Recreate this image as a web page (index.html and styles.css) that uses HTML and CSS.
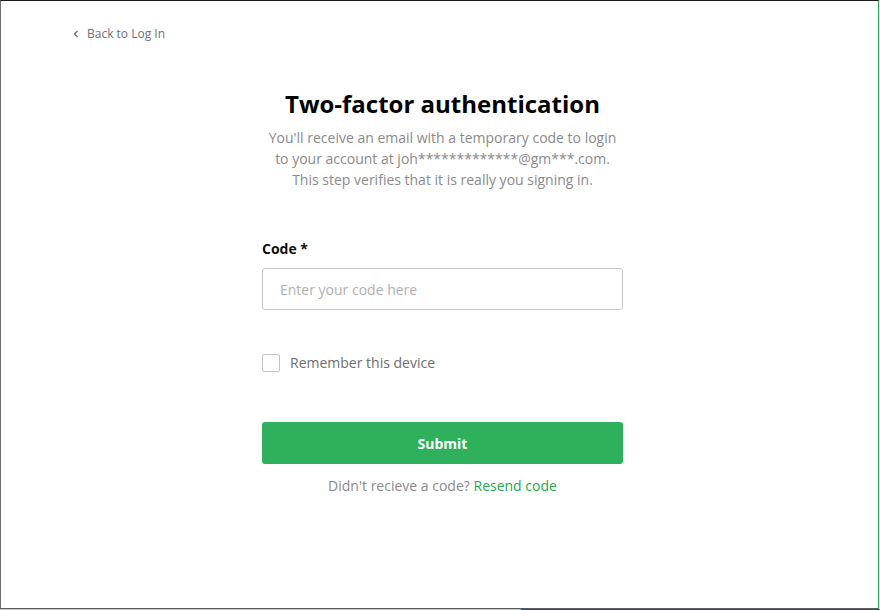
FILE: index.html
```html
<!DOCTYPE html>
<html lang="en">
<head>
<meta charset="utf-8">
<title>Two-factor authentication</title>
<link rel="stylesheet" href="styles.css">
</head>
<body>
<div class="screen">
  <div class="window">
    <div class="topbar">
      <a class="back" href="#">
        <svg class="chev" width="6" height="8" viewBox="0 0 6 8"><path d="M4.5 1 L1.5 4 L4.5 7" fill="none" stroke="#6b6f7d" stroke-width="1.4"/></svg>
        <span>Back to Log In</span>
      </a>
    </div>
    <main class="main">
      <div class="col">
        <h1 class="title">Two-factor authentication</h1>
        <p class="sub">You'll receive an email with a temporary code to login<br>to your account at joh*************@gm***.com.<br>This step verifies that it is really you signing in.</p>
        <label class="label" for="code">Code *</label>
        <input class="input" id="code" type="text" placeholder="Enter your code here">
        <label class="check">
          <span class="box"></span>
          <span class="check-text">Remember this device</span>
        </label>
        <button class="submit" type="button">Submit</button>
        <p class="resend">Didn't recieve a code? <a href="#" class="link">Resend code</a></p>
      </div>
    </main>
  </div>
  <div class="strip">
    <div class="strip-left"></div>
    <div class="strip-right"></div>
  </div>
</div>
</body>
</html>
```

FILE: styles.css
```css
* { box-sizing: border-box; }
html, body { margin: 0; padding: 0; background: #ffffff; }
body { font-family: "Open Sans", "Noto Sans", Arial, sans-serif; }

.screen { width: 880px; height: 610px; overflow: hidden; }

.window {
  width: 879px;
  height: 609px;
  border-top: 1px solid #1b1b1b;
  border-left: 1px solid #6e6e6e;
  border-right: 1px solid #2fa862;
  border-bottom: 1px solid #5c5c5c;
  background: #fff;
}

.strip { display: flex; height: 1px; }
.strip-left { width: 521px; background: #c9c9c9; }
.strip-right { flex: 1; background: #1d4f8a; }

.topbar { padding: 20px 0 0 72px; height: 43px; }
.back {
  display: inline-flex;
  align-items: center;
  gap: 8px;
  font-size: 12px;
  line-height: 18px;
  color: #6b6f7d;
  text-decoration: none;
}
.chev { display: block; }

.main { display: flex; justify-content: center; padding-left: 6px; }
.col { width: 361px; display: flex; flex-direction: column; }

.title {
  margin: 45px -40px 0;
  font-size: 24px;
  line-height: 30px;
  font-weight: 700;
  color: #000;
  text-align: center;
}
.sub {
  margin: 8px -40px 0;
  font-size: 14px;
  line-height: 21px;
  color: #8a8a8a;
  text-align: center;
}
.label {
  margin-top: 49px;
  font-size: 14px;
  line-height: 20px;
  font-weight: 700;
  color: #111;
}
.input {
  margin-top: 9px;
  height: 42px;
  width: 100%;
  border: 1px solid #c6c6cc;
  border-radius: 3px;
  padding: 0 17px;
  font-family: inherit;
  font-size: 14px;
  color: #333;
  outline: none;
}
.input::placeholder { color: #b0b0b0; }

.check {
  margin-top: 44px;
  display: flex;
  align-items: center;
  gap: 10px;
  height: 18px;
}
.box {
  width: 18px;
  height: 18px;
  border: 1px solid #c3c3ca;
  border-radius: 2px;
  background: #fff;
}
.check-text { font-size: 14px; line-height: 18px; color: #6d6d6d; }

.submit {
  margin-top: 50px;
  height: 42px;
  width: 100%;
  border: 0;
  border-radius: 3px;
  background: #2eb05c;
  color: #fff;
  font-family: inherit;
  font-size: 14px;
  font-weight: 700;
}
.resend {
  margin: 12px 0 0;
  font-size: 14px;
  line-height: 20px;
  color: #8a8a8a;
  text-align: center;
}
.link { color: #27a852; text-decoration: none; }
```
